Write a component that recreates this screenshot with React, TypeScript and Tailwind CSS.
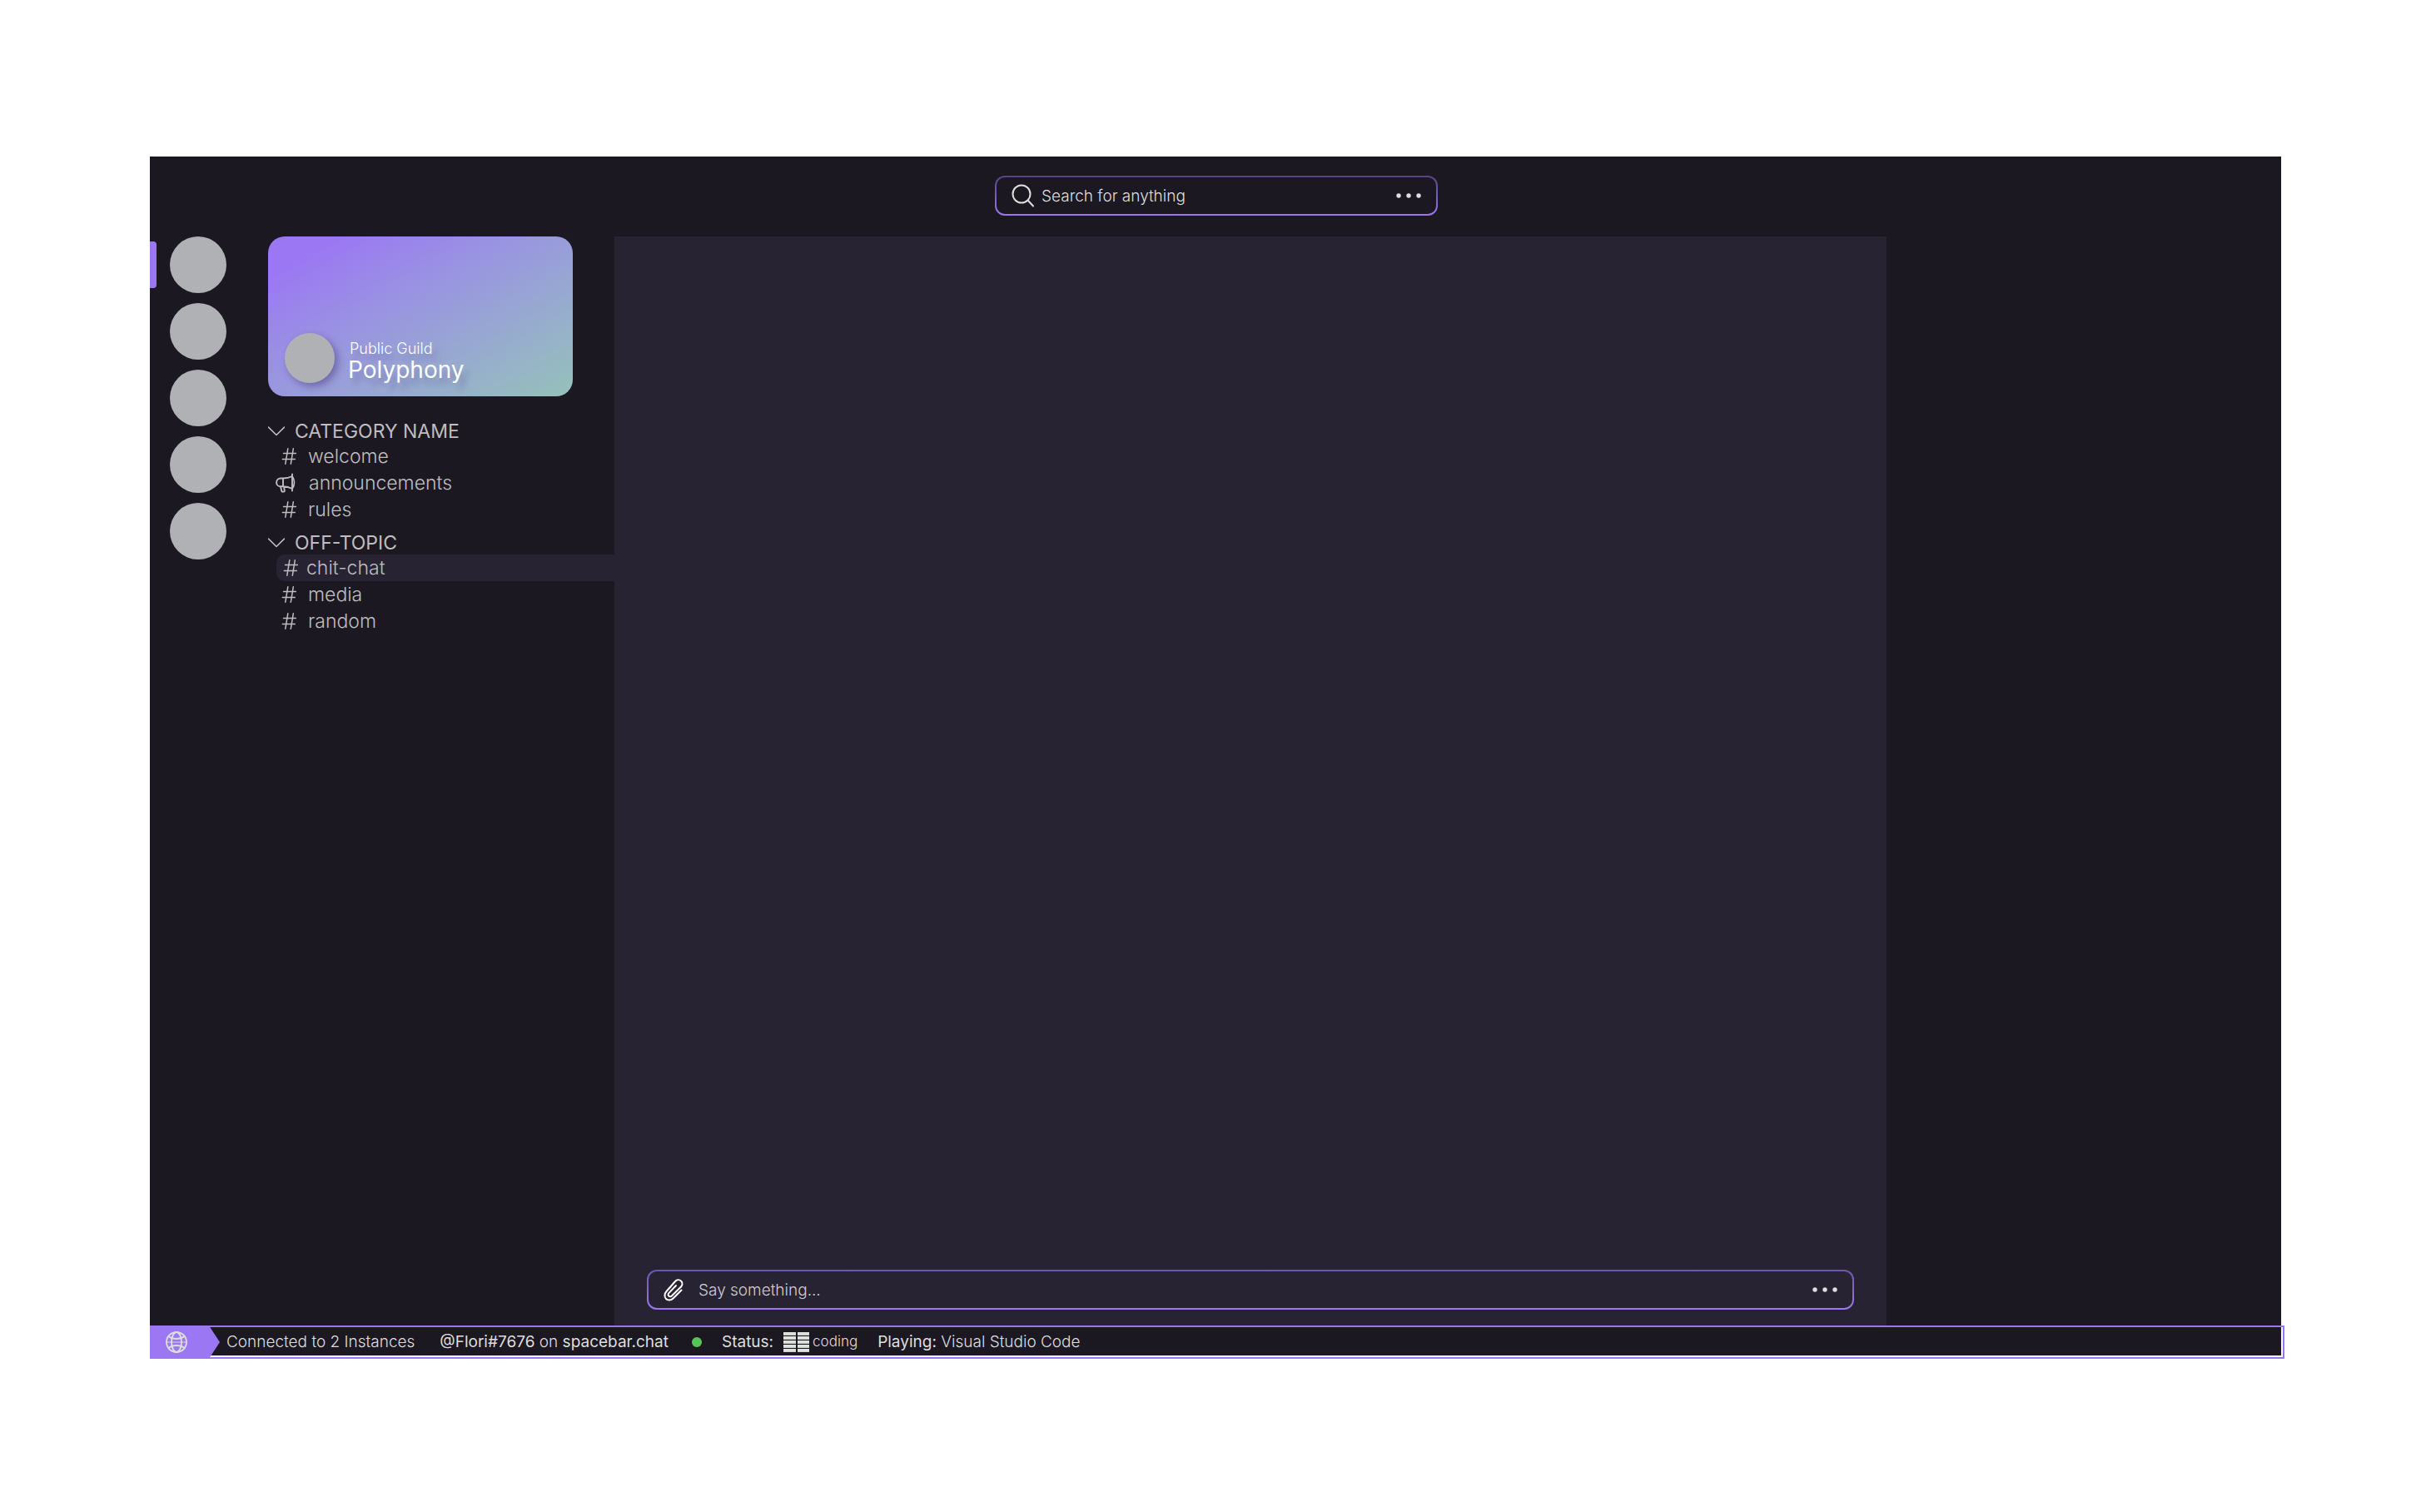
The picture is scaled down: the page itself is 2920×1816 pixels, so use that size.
import React from "react";

const servers = ["Polyphony", "Server two", "Server three", "Server four", "Server five"];

type Channel = { name: string; kind: "text" | "news"; active?: boolean };

const categories: { name: string; channels: Channel[] }[] = [
  {
    name: "CATEGORY NAME",
    channels: [
      { name: "welcome", kind: "text" },
      { name: "announcements", kind: "news" },
      { name: "rules", kind: "text" },
    ],
  },
  {
    name: "OFF-TOPIC",
    channels: [
      { name: "chit-chat", kind: "text", active: true },
      { name: "media", kind: "text" },
      { name: "random", kind: "text" },
    ],
  },
];

function Chevron() {
  return (
    <svg className="h-3 w-5 shrink-0" viewBox="0 0 20 12" fill="none" stroke="currentColor" strokeWidth="1.6" strokeLinecap="round" strokeLinejoin="round" aria-hidden="true">
      <path d="M.5 1L10 10.500L19.500 1" />
    </svg>
  );
}

function Hash() {
  return (
    <svg className="h-5 w-[18px] shrink-0" viewBox="0 0 18 20" fill="none" stroke="currentColor" strokeWidth="1.5" strokeLinecap="round" aria-hidden="true">
      <path d="M7.800 .8L4.800 19.200M14.300 .8l-3 18.400M2.500 6.500h15M1.300 13.500h15" />
    </svg>
  );
}

function Megaphone() {
  return (
    <svg className="h-6 w-6 shrink-0" viewBox="0 0 24 24" fill="none" stroke="currentColor" strokeWidth="1.9" strokeLinecap="round" strokeLinejoin="round" aria-hidden="true">
      <path d="M20 1.500v20M20 4C16.500 5.700 13 6.500 9 6.500H6a4.900 4.900 0 0 0 0 9.800h3c4 0 7.500.8 11 2.700M9 6.500v9.800M20 4c3.200 4.500 3.200 10.500 0 15M6 16.500l1.300 5.300a1 1 0 0 0 1 .8h1.500a1 1 0 0 0 1-1.200l-.8-4.800" />
    </svg>
  );
}

function SearchIcon() {
  return (
    <svg className="h-7 w-7 shrink-0" viewBox="0 0 28 28" fill="none" stroke="currentColor" strokeWidth="2" strokeLinecap="round" aria-hidden="true">
      <circle cx="12" cy="12" r="10.500" />
      <path d="M19.500 19.500L26 26.500" />
    </svg>
  );
}

function Dots() {
  return (
    <svg className="h-1.5 w-[30px]" viewBox="0 0 30 6" fill="currentColor" aria-hidden="true">
      <circle cx="3" cy="3" r="2.700" />
      <circle cx="15" cy="3" r="2.700" />
      <circle cx="27" cy="3" r="2.700" />
    </svg>
  );
}

function Paperclip() {
  return (
    <svg className="h-[27px] w-6 shrink-0" viewBox="0 0 24 27" fill="none" stroke="currentColor" strokeWidth="2" strokeLinecap="round" strokeLinejoin="round" aria-hidden="true">
      <path d="M21.500 13.500L11.500 23.500c-2.800 2.700-6.500 2.500-8.500.5s-2.300-6 .5-9L14 3c2-2.200 5-2.300 7-.5s2 5 0 7L9.800 20.500c-1 1-2.600 1-3.500.1s-1-2.500 0-3.500L15 8" />
    </svg>
  );
}

function Globe() {
  return (
    <svg className="h-[26px] w-[26px]" viewBox="0 0 26 26" fill="none" stroke="currentColor" strokeWidth="1.900" aria-hidden="true">
      <circle cx="13" cy="13" r="12" />
      <ellipse cx="13" cy="13" rx="6" ry="12" />
      <path d="M1 13h24" strokeWidth="1" />
      <path d="M3.500 6c5 4 14 4 19 0M3.500 20c5-4 14-4 19 0" />
    </svg>
  );
}

function StatusEmoji() {
  return (
    <svg className="h-6 w-[31px] shrink-0" viewBox="0 0 31 24" fill="#dfe1de" aria-hidden="true">
      {[0, 5, 10, 15, 20].map((y) => (
        <g key={y}>
          <rect x="0" y={y} width="15" height="3.900" />
          <rect x="17" y={y} width="14" height="3.900" />
        </g>
      ))}
    </svg>
  );
}

function ChannelIcon({ kind, active }: { kind: Channel["kind"]; active?: boolean }) {
  if (kind === "news") {
    return (
      <span className="mr-4 ml-[3px]">
        <Megaphone />
      </span>
    );
  }
  return (
    <span className={active ? "mr-2.5 ml-2" : "mr-3.5 ml-2.5"}>
      <Hash />
    </span>
  );
}

export default function App() {
  return (
    <div className="min-h-screen bg-white px-[180px] pt-[188px] pb-[184px] font-['Inter',sans-serif] font-light text-[#dedede]">
      <div className="flex min-h-[1444px] flex-col">
        <div className="flex grow flex-col bg-[#1c1822]">
          <header className="flex h-24 shrink-0 items-start justify-center pt-[23px] pl-0.5">
            <div className="w-[532px] rounded-xl bg-linear-to-b from-[#544482] to-[#9b77f3] p-0.5">
              <form className="flex h-11 items-center rounded-[10px] bg-[#1c1822] px-[18px]">
                <SearchIcon />
                <input
                  aria-label="Search"
                  placeholder="Search for anything"
                  className="ml-2 min-w-0 grow bg-transparent pt-0.5 text-[19px] outline-none placeholder:text-[#dedede]"
                />
                <button type="button" aria-label="Search options">
                  <Dots />
                </button>
              </form>
            </div>
          </header>

          <div className="flex grow">
            <nav aria-label="Servers" className="w-[142px] shrink-0">
              <ul className="flex flex-col gap-3">
                {servers.map((name, i) => (
                  <li key={name} className="flex items-center">
                    <span className={i === 0 ? "h-14 w-2 rounded-r bg-[#9b77f3]" : "h-14 w-2"} />
                    <button type="button" aria-label={name} className="ml-4 size-[68px] rounded-full bg-[#b0b1b5]" />
                  </li>
                ))}
              </ul>
            </nav>

            <aside className="flex w-[416px] shrink-0 flex-col">
              <div className="mr-[50px] flex h-48 items-end rounded-[20px] bg-linear-150 from-[#9b77f3] from-12% to-[#95c1b9] p-5 pb-4 text-white">
                <span className="size-[60px] rounded-full bg-[#b0b1b5] shadow-[4px_4px_10px_rgba(60,40,110,0.45)]" />
                <div className="ml-4 text-shadow-[6px_8px_6px_rgba(60,40,110,0.25)]">
                  <p className="pl-0.5 text-lg leading-[18px]">Public Guild</p>
                  <h1 className="text-[28px] leading-8 font-normal">Polyphony</h1>
                </div>
              </div>

              <div className="mt-7 flex flex-col gap-2.5 text-[23px] text-[#bfbdc0]">
                {categories.map((category) => (
                  <section key={category.name}>
                    <button type="button" className="flex h-7 items-center gap-3 font-normal">
                      <Chevron />
                      {category.name}
                    </button>
                    <ul>
                      {category.channels.map((channel) => (
                        <li key={channel.name}>
                          <a
                            href="#"
                            className={
                              channel.active
                                ? "ml-2.5 flex h-8 items-center rounded-l-[10px] bg-[#282333]"
                                : "ml-1.5 flex h-8 items-center"
                            }
                          >
                            <ChannelIcon kind={channel.kind} active={channel.active} />
                            {channel.name}
                          </a>
                        </li>
                      ))}
                    </ul>
                  </section>
                ))}
              </div>
            </aside>

            <main className="flex grow flex-col justify-end bg-[#282333] px-[39px] pb-[19px]">
              <div className="rounded-xl bg-linear-to-b from-[#6d57a8] to-[#9b77f3] p-0.5">
                <form className="flex h-11 items-center rounded-[10px] bg-[#282333] px-[18px]">
                  <button type="button" aria-label="Attach a file" className="text-white">
                    <Paperclip />
                  </button>
                  <input
                    aria-label="Message"
                    placeholder="Say something..."
                    className="ml-[18px] min-w-0 grow bg-transparent pt-0.5 text-[19px] outline-none placeholder:text-[#cfcdd2]"
                  />
                  <button type="button" aria-label="Message options">
                    <Dots />
                  </button>
                </form>
              </div>
            </main>

            <aside aria-label="Members" className="w-[474px] shrink-0" />
          </div>
        </div>

        <footer className="-mr-1 h-10 shrink-0 border-2 border-l-0 border-[#9b77f3] pr-0.5 pb-0.5 text-[19px]">
          <div className="flex h-full items-center bg-[#1c1822]">
            <button
              type="button"
              aria-label="Instances"
              className="-mb-0.5 flex h-9 w-[84px] items-center bg-[#9b77f3] pl-[19px] [clip-path:polygon(0_0,86%_0,100%_50%,86%_100%,0_100%)]"
            >
              <Globe />
            </button>
            <div className="flex items-center pt-0.5">
              <span className="ml-2">Connected to 2 Instances</span>
              <span className="ml-[30px]">
                <span className="font-normal">@Flori#7676</span> on <span className="font-normal">spacebar.chat</span>
              </span>
              <span className="ml-7 size-3 rounded-full bg-[#56c456]" />
              <span className="ml-6 font-normal">Status:</span>
              <span className="ml-3 flex items-center gap-1 text-[17px]">
                <StatusEmoji />
                coding
              </span>
              <span className="ml-6">
                <span className="font-normal">Playing:</span> Visual Studio Code
              </span>
            </div>
          </div>
        </footer>
      </div>
    </div>
  );
}
